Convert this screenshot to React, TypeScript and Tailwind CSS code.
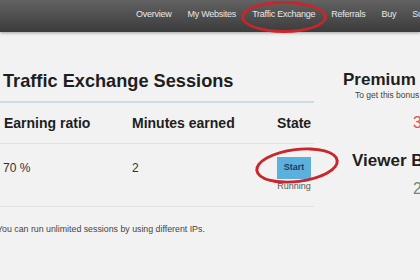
export default function App() {
  const nav = ["Overview", "My Websites", "Traffic Exchange", "Referrals", "Buy", "Support"];

  return (
    <div className="relative h-[280px] w-[420px] overflow-hidden bg-[#f2f2f2] font-['Liberation_Sans',Arial,sans-serif] text-[#222]">
      {/* top bar */}
      <div className="flex h-[32px] items-center gap-[16px] overflow-hidden whitespace-nowrap bg-gradient-to-b from-[#626262] to-[#3c3c3c] pb-[2px] pl-[136px] text-[9px] tracking-[-0.25px] text-[#e8e8e8] shadow-[0_1px_3px_rgba(0,0,0,0.35)]">
        {nav.map((n) => (
          <span key={n}>{n}</span>
        ))}
      </div>

      <div className="flex">
        {/* sessions table */}
        <div className="w-[314px] shrink-0">
          <h1 className="mb-[9px] pl-[3px] pt-[38px] text-[18.2px] font-bold leading-[22px] text-[#1e1e1e]">
            Traffic Exchange Sessions
          </h1>
          <div className="h-[2px] bg-[#c9dde7]" />

          <div className="flex h-[41px] items-center border-b border-[#e2e2e2] text-[14px] font-bold text-[#1e1e1e]">
            <div className="w-[132px] pl-[4px]">Earning ratio</div>
            <div className="w-[142px]">Minutes earned</div>
            <div className="w-[40px] text-center">State</div>
          </div>

          <div className="flex h-[63px] items-start border-b border-[#e2e2e2] pt-[13px] text-[12px] text-[#333]">
            <div className="w-[132px] pl-[3px] leading-[22px]">70 %</div>
            <div className="w-[142px] leading-[22px]">2</div>
            <div className="flex w-[40px] flex-col items-center">
              <button className="h-[22px] w-[34px] bg-[#5cb0dd] text-[9px] font-bold text-[#1d3c5e]">Start</button>
              <span className="mt-[2px] text-[9px] leading-[10px] text-[#555]">Running</span>
            </div>
          </div>

          <p className="ml-[-3px] mt-[16px] whitespace-nowrap text-[8.8px] leading-[12px] text-[#444]">
            You can run unlimited sessions by using different IPs.
          </p>
        </div>

        {/* bonuses */}
        <div className="flex flex-col whitespace-nowrap">
          <div className="ml-[29px] mt-[39px] text-[17px] font-bold leading-[18px] text-[#1e1e1e]">Premium Bonus</div>
          <div className="ml-[41px] mt-[1px] text-[8.5px] leading-[10px] text-[#444]">To get this bonus you need</div>
          <div className="ml-[99px] mt-[14px] text-[16px] leading-[18px] text-[#d9534f]">30 %</div>
          <div className="ml-[38px] mt-[19px] text-[17px] font-bold leading-[20px] text-[#1e1e1e]">Viewer Bonus</div>
          <div className="ml-[99px] mt-[9px] text-[16px] leading-[18px] text-[#6d8a6d]">20 %</div>
        </div>
      </div>

      {/* annotation circles */}
      <div className="absolute left-[241px] top-[1px] h-[32px] w-[86px] rounded-[50%] border-[3px] border-[#cb252c]" />
      <div className="absolute left-[255px] top-[148px] h-[35px] w-[84px] -rotate-[7deg] rounded-[50%] border-[3px] border-[#cb252c]" />
    </div>
  );
}
